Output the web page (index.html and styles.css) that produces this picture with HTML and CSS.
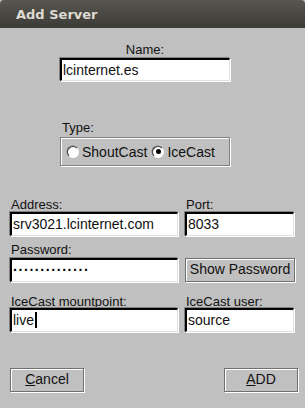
FILE: index.html
```html
<!DOCTYPE html>
<html>
<head>
<meta charset="utf-8">
<link rel="stylesheet" href="styles.css">
</head>
<body>
<div class="window">
  <div class="titlebar">Add Server</div>
  <div class="content">
    <div class="name-block">
      <div class="label center">Name:</div>
      <div class="field name-field">lcinternet.es</div>
    </div>
    <div class="type-block">
      <div class="label">Type:</div>
      <div class="group">
        <span class="radio"></span><span class="radio-text">ShoutCast</span>
        <span class="radio checked"></span><span class="radio-text">IceCast</span>
      </div>
    </div>
    <div class="grid">
      <div class="label">Address:</div>
      <div class="label">Port:</div>
      <div class="field">srv3021.lcinternet.com</div>
      <div class="field">8033</div>
      <div class="label row-gap">Password:</div>
      <div class="label row-gap"></div>
      <div class="field dots">··············</div>
      <div class="button">Show Password</div>
      <div class="label row-gap2">IceCast mountpoint:</div>
      <div class="label row-gap2">IceCast user:</div>
      <div class="field">live<span class="caret"></span></div>
      <div class="field">source</div>
    </div>
    <div class="actions">
      <div class="button action"><u>C</u>ancel</div>
      <div class="button action"><u>A</u>DD</div>
    </div>
  </div>
</div>
</body>
</html>
```

FILE: styles.css
```css
html, body {
  margin: 0;
  padding: 0;
  background: #c0c0c0;
}
.window {
  width: 305px;
  height: 408px;
  background: #c0c0c0;
  font-family: "Liberation Sans", Arial, sans-serif;
  color: #000;
}
.titlebar {
  height: 28px;
  box-sizing: border-box;
  padding-left: 16px;
  line-height: 29px;
  font-family: "DejaVu Sans", sans-serif;
  font-weight: bold;
  font-size: 13px;
  color: #dfdbd2;
  background: linear-gradient(#57564f, #3c3b37);
  border-radius: 4px 4px 0 0;
}
.content {
  padding: 0 10px;
}
.label {
  font-size: 13px;
  line-height: 15px;
  height: 15px;
  color: #111;
}
.center { text-align: center; }
.field {
  box-sizing: border-box;
  height: 24px;
  background: #fff;
  border-style: solid;
  border-width: 2px 1px 1px 2px;
  border-color: #000 #e0e0e0 #e0e0e0 #000;
  box-shadow: -1px -1px 0 #808080, 1px 1px 0 #fff;
  font-size: 14px;
  line-height: 20px;
  padding-left: 1px;
  white-space: nowrap;
  overflow: hidden;
  color: #111;
}
.name-block {
  width: 170px;
  margin-left: 50px;
  padding-top: 14px;
}
.name-block .label { height: 16px; }
.name-field { height: 23px; }
.type-block {
  width: 170px;
  margin-left: 50px;
  margin-top: 39px;
}
.type-block .label { padding-left: 2px; height: 17px; }
.group {
  box-sizing: border-box;
  height: 29px;
  border: 1px solid #808080;
  box-shadow: inset 1px 1px 0 #fff, 1px 1px 0 #fff;
  display: flex;
  align-items: center;
  padding-left: 6px;
  font-size: 14px;
}
.radio {
  width: 12px;
  height: 12px;
  box-sizing: border-box;
  border-radius: 50%;
  background: #fff;
  border: 1px solid;
  border-color: #404040 #fff #fff #404040;
  box-shadow: -0.5px -0.5px 0 #808080;
  margin-right: 3px;
  position: relative;
}
.radio.checked::after {
  content: "";
  position: absolute;
  left: 2.5px;
  top: 2.5px;
  width: 5px;
  height: 5px;
  border-radius: 50%;
  background: #000;
}
.radio-text { margin-right: 5px; color: #111; }
.grid {
  display: grid;
  grid-template-columns: 168px 109px;
  column-gap: 7px;
  margin-top: 31px;
}
.grid .label { padding-left: 1px; }
.row-gap { margin-top: 6px; height: 16px; }
.row-gap2 { margin-top: 12px; height: 14px; }
.dots {
  font-size: 14px;
  letter-spacing: 0.8px;
  font-weight: bold;
  color: #000;
}
.caret {
  display: inline-block;
  width: 2px;
  height: 16px;
  background: #000;
  vertical-align: -3px;
  margin-left: 1px;
}
.button {
  box-sizing: border-box;
  height: 24px;
  border: 1px solid #707070;
  box-shadow: inset 1px 1px 0 #fff, 1px 1px 0 #fff;
  background: #c0c0c0;
  font-size: 14px;
  line-height: 21px;
  text-align: center;
  color: #111;
}
.grid .button { width: 110px; }
.actions {
  display: flex;
  justify-content: space-between;
  margin-top: 36px;
  margin-right: -3px;
}
.action {
  width: 74px;
}
```
